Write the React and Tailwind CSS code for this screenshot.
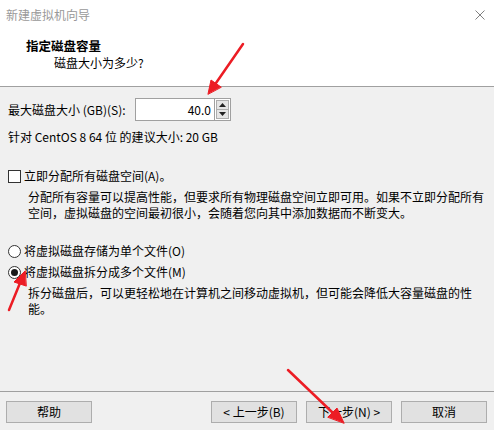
import React from 'react';

const font = { fontFamily: '"Noto Sans CJK SC", "Noto Sans", sans-serif' };

const Radio = ({ checked }) => (
  <span className="flex h-[13px] w-[13px] shrink-0 items-center justify-center rounded-full border border-[#333333] bg-white">
    {checked && <span className="h-[7px] w-[7px] rounded-full bg-[#1a1a1a]"></span>}
  </span>
);

const Button = ({ children }) => (
  <button
    type="button"
    className="flex h-[22px] w-[86px] items-center justify-center border border-[#adadad] bg-[#e1e1e1] text-[12px] leading-none text-black"
  >
    {children}
  </button>
);

const Arrows = () => (
  <svg className="pointer-events-none absolute inset-0" width="494" height="430" viewBox="0 0 494 430">
    <g stroke="#ec1c24" strokeWidth="2.5" strokeLinecap="round" fill="#ec1c24">
      <line x1="243" y1="44" x2="216" y2="83" />
      <polygon points="208,94 211,80 221,87" strokeWidth="1" />
      <line x1="9" y1="310" x2="20" y2="283" />
      <polygon points="25,271 14,282 26,286" strokeWidth="1" />
      <line x1="288" y1="370" x2="333" y2="413" />
      <polygon points="344,423 337,408 328,417" strokeWidth="1" />
    </g>
  </svg>
);

export default function App() {
  return (
    <div className="relative flex h-[430px] w-[494px] flex-col overflow-hidden bg-[#f0f0f0] text-[12px] text-black" style={font}>
      {/* Header */}
      <div className="h-[87px] shrink-0 border-b border-[#a0a0a0] bg-white">
        <div className="flex h-[30px] items-center justify-between pl-[6px] pr-[9px]">
          <span className="leading-[16px] text-[#999999]">新建虚拟机向导</span>
          <svg width="10" height="10" viewBox="0 0 10 10">
            <path d="M0.5 0.5 L9.5 9.5 M9.5 0.5 L0.5 9.5" stroke="#808080" strokeWidth="1" />
          </svg>
        </div>
        <div className="mt-[8px] pl-[26px] text-[12.5px] font-bold leading-[16px]">指定磁盘容量</div>
        <div className="mt-[1px] pl-[54px] leading-[16px]">磁盘大小为多少?</div>
      </div>

      {/* Body */}
      <div className="flex flex-1 flex-col px-[8px]">
        <div className="mt-[11px] flex h-[23px] items-center">
          <span className="w-[127px] leading-[16px]">最大磁盘大小 (GB)(S):</span>
          <div className="flex h-[23px] w-[80px] items-center justify-end border border-[#a0a0a0] bg-white pr-[3px] leading-none">
            40.0
          </div>
          <div className="flex h-[23px] w-[16px] flex-col border border-l-0 border-[#a0a0a0] bg-white p-[1px]">
            <div className="flex flex-1 items-center justify-center border border-[#adadad] bg-[#e5e5e5]">
              <svg width="7" height="4" viewBox="0 0 7 4"><path d="M0 4 L3.5 0 L7 4 Z" fill="#222" /></svg>
            </div>
            <div className="flex flex-1 items-center justify-center border border-t-0 border-[#adadad] bg-[#e5e5e5]">
              <svg width="7" height="4" viewBox="0 0 7 4"><path d="M0 0 L7 0 L3.5 4 Z" fill="#222" /></svg>
            </div>
          </div>
        </div>
        <div className="mt-[8px] leading-[16px]">针对 CentOS 8 64 位 的建议大小: 20 GB</div>

        <div className="mt-[23px] flex items-center gap-[3px] leading-[16px]">
          <span className="h-[13px] w-[13px] shrink-0 border border-[#333333] bg-white"></span>
          <span>立即分配所有磁盘空间(A)。</span>
        </div>
        <div className="mt-[5px] pl-[20px] leading-[16px]">
          分配所有容量可以提高性能，但要求所有物理磁盘空间立即可用。如果不立即分配所有
          <br />
          空间，虚拟磁盘的空间最初很小，会随着您向其中添加数据而不断变大。
        </div>

        <div className="mt-[22px] flex items-center gap-[3px] leading-[16px]">
          <Radio />
          <span>将虚拟磁盘存储为单个文件(O)</span>
        </div>
        <div className="mt-[5px] flex items-center gap-[3px] leading-[16px]">
          <Radio checked />
          <span>将虚拟磁盘拆分成多个文件(M)</span>
        </div>
        <div className="mt-[5px] pl-[20px] leading-[16px]">
          拆分磁盘后，可以更轻松地在计算机之间移动虚拟机，但可能会降低大容量磁盘的性
          <br />
          能。
        </div>
      </div>

      {/* Footer */}
      <div className="h-[39px] shrink-0 border-t border-[#a0a0a0] pt-[9px]">
        <div className="flex items-center pl-[6px] pr-[7px]">
          <Button>帮助</Button>
          <div className="ml-auto flex gap-[9px]">
            <Button>&lt; 上一步(B)</Button>
            <Button>下一步(N) &gt;</Button>
            <Button>取消</Button>
          </div>
        </div>
      </div>

      <Arrows />
    </div>
  );
}
